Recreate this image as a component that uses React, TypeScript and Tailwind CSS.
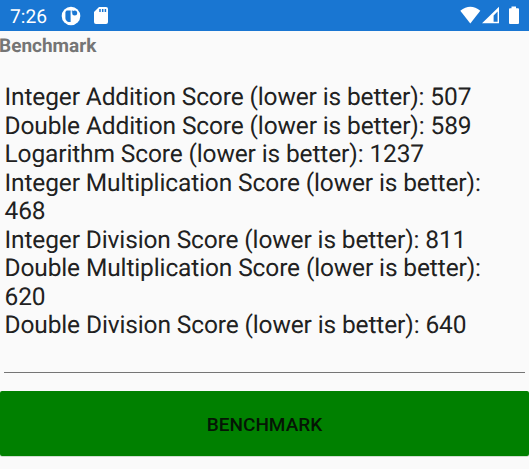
export default function App() {
  const lines = [
    "Integer Addition Score (lower is better): 507",
    "Double Addition Score (lower is better): 589",
    "Logarithm Score (lower is better): 1237",
    "Integer Multiplication Score (lower is better):",
    "468",
    "Integer Division Score (lower is better): 811",
    "Double Multiplication Score (lower is better):",
    "620",
    "Double Division Score (lower is better): 640",
  ];
  return (
    <div className="flex h-[469px] w-[529px] flex-col overflow-hidden bg-[#fafafa] font-[Roboto,sans-serif] [text-rendering:geometricPrecision]">
      <header className="flex h-[31px] shrink-0 items-center bg-[#1976d2] text-white">
        <span className="ml-[10px] w-[51px] pt-px text-[19.2px] leading-[31px]">7:26</span>
        <svg className="h-[20px] w-[20px]" viewBox="0 0 20 20">
          <circle cx="10" cy="10" r="9.3" fill="white" />
          <path d="M5.6 4.6h4v11.4h-2q-3-1-3.2-4V6z" fill="#1976d2" />
          <path d="M10.8 4.6h1v2h-1z" fill="#1976d2" />
          <circle cx="13.7" cy="6.9" r="2.5" fill="#1976d2" />
        </svg>
        <svg className="ml-[13px] h-[17px] w-[14px]" viewBox="0 0 14 17">
          <path d="M5 0h7q2 0 2 2v13q0 2-2 2H2q-2 0-2-2V5z" fill="white" />
          <path d="M6 2v3M8.7 2v3M11.4 2v3" stroke="#1976d2" strokeWidth="1.5" />
        </svg>
        <svg className="ml-auto h-[31px] w-[69px]" viewBox="460 0 69 31" fill="white">
          <path d="M460.3 10.8q10-8 20 0L470.3 23.4z" />
          <path fillRule="evenodd" d="M499 6.8v16.4h-17zM497.6 11.5l-4 4v6.3h4z" />
          <path d="M511.5 6.5h4.5v1.7h2q1 0 1 1V23q0 1-1 1h-8q-1 0-1-1V9.2q0-1 1-1h1.5z" />
        </svg>
      </header>
      <h1 className="h-[52px] shrink-0 pt-[3px] text-[19px] leading-[24px] font-bold -indent-px text-[#757575]">Benchmark</h1>
      <main className="mx-[4px] h-[290px] shrink-0 border-b border-[#757575] text-[24.5px] leading-[28.55px] tracking-[-0.13px] text-[#212121]">
        {lines.map((line) => <div key={line} className="pl-[0.5px] whitespace-nowrap">{line}</div>)}
      </main>
      <button className="mt-[18px] h-[65px] shrink-0 rounded-[2px] bg-[#008000] pt-[4px] text-[19px] font-medium text-[#051505] shadow-[0_1px_0_#d0ded0]">BENCHMARK</button>
    </div>
  );
}
